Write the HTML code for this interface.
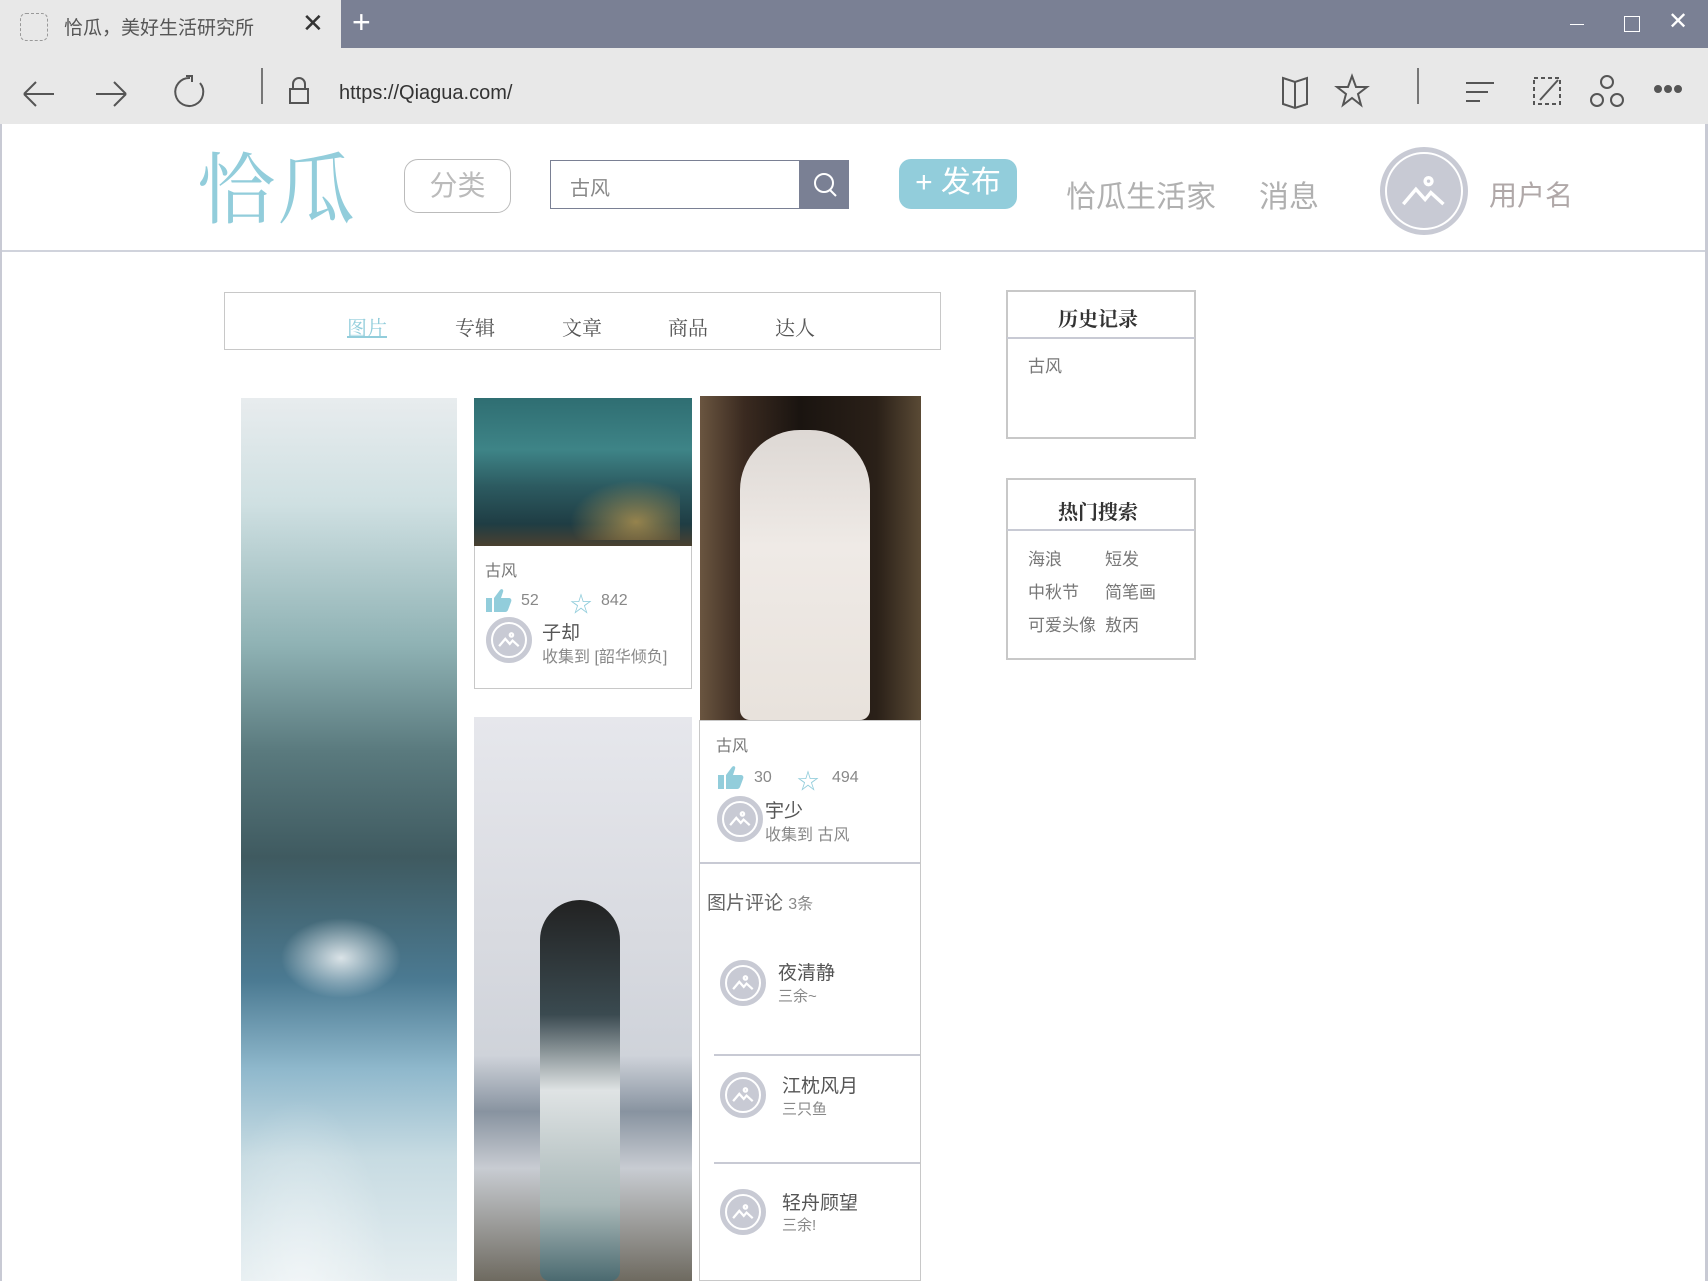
<!DOCTYPE html>
<html><head><meta charset="utf-8">
<style>
*{margin:0;padding:0;box-sizing:border-box}
body{width:1708px;height:1281px;overflow:hidden;background:#fff;position:relative;font-family:"Liberation Sans","Noto Sans CJK SC",sans-serif;color:#666}
.a{position:absolute;white-space:nowrap}
.serif{font-family:"Liberation Serif","Noto Serif CJK SC",serif}
.av{position:absolute;border-radius:50%;background:#c8cad4;border:3px solid #c8cad4;}
.av::before{content:"";position:absolute;inset:2px;border-radius:50%;border:2px solid #fff}
.av svg{position:absolute;left:22%;top:25%;width:56%;height:50%}
.box{position:absolute;border:2px solid #c8c8c8;background:#fff}
</style></head><body>
<div class="a" style="left:0;top:0;width:1708px;height:48px;background:#7a8094"></div>
<div class="a" style="left:0;top:0;width:341px;height:48px;background:#e8e8e8"></div>
<div class="a" style="left:20px;top:13px;width:28px;height:28px;border:1px dashed #999;border-radius:6px"></div>
<div class="a" style="left:64px;top:13px;font-size:19px;color:#555">恰瓜，美好生活研究所</div>
<div class="a" style="left:302px;top:8px;font-size:26px;color:#333">✕</div>
<div class="a" style="left:352px;top:4px;font-size:32px;color:#fff">+</div>
<div class="a" style="left:1570px;top:24px;width:14px;height:1px;background:#fff"></div>
<div class="a" style="left:1624px;top:16px;width:16px;height:16px;border:1.5px solid #fff"></div>
<div class="a" style="left:1668px;top:7px;font-size:24px;color:#fff">✕</div>
<div class="a" style="left:0;top:48px;width:1708px;height:76px;background:#e8e8e8"></div>
<svg class="a" style="left:0;top:48px" width="1708" height="76" fill="none" stroke="#555" stroke-width="2">
<path d="M24 46h30M24 46l12-12M24 46l12 12"/>
<path d="M96 46h30M126 46l-12-12M126 46l-12 12"/>
<path d="M190 30a14 14 0 1 0 10 5"/><path d="M186 28h6v6"/>
<path d="M262 20v36" stroke="#777"/>
<rect x="290" y="41" width="18" height="14"/><path d="M293 41v-5a6 6 0 0 1 12 0v5"/>
<path d="M1283 30l12 4l12-4v26l-12 4l-12-4z M1295 34v26"/>
<path d="M1352 28l4 11h11l-9 7l3 11l-9-7l-9 7l3-11l-9-7h11z"/>
<path d="M1418 20v36" stroke="#777"/>
<path d="M1466 35h28M1466 44h22M1466 53h14"/>
<rect x="1534" y="30" width="26" height="26" stroke-dasharray="4 3"/><path d="M1540 52l18-20"/>
<circle cx="1607" cy="34" r="6"/><circle cx="1597" cy="52" r="6"/><circle cx="1617" cy="52" r="6"/>
<circle cx="1658" cy="41" r="3" fill="#555"/><circle cx="1668" cy="41" r="3" fill="#555"/><circle cx="1678" cy="41" r="3" fill="#555"/>
</svg>
<div class="a" style="left:339px;top:82px;font-size:20px;color:#333">https://Qiagua.com/</div>
<div class="a" style="left:0;top:124px;width:2px;height:1157px;background:#c8cad4"></div>
<div class="a" style="left:1705px;top:124px;width:3px;height:1157px;background:#c8cad4"></div>
<div class="a serif" style="left:197px;top:128px;font-size:78px;color:#92cddb;letter-spacing:2px">恰瓜</div>
<div class="a" style="left:404px;top:159px;width:107px;height:54px;border:1px solid #bbb;border-radius:14px;text-align:center;line-height:52px;font-size:28px;color:#bbb">分类</div>
<div class="a" style="left:550px;top:160px;width:250px;height:49px;border:1.5px solid #7a8094"></div>
<div class="a" style="left:570px;top:172px;font-size:20px;color:#888">古风</div>
<div class="a" style="left:800px;top:160px;width:49px;height:49px;background:#7a8094"></div>
<svg class="a" style="left:800px;top:160px" width="49" height="49" fill="none" stroke="#fff" stroke-width="2"><circle cx="24" cy="23" r="9"/><path d="M30 30l6 6"/></svg>
<div class="a" style="left:899px;top:159px;width:118px;height:50px;background:#92cddb;border-radius:12px;color:#fff;font-size:30px;line-height:48px;text-align:center">+ 发布</div>
<div class="a" style="left:1066px;top:172px;font-size:30px;color:#b0b0b0">恰瓜生活家</div>
<div class="a" style="left:1259px;top:172px;font-size:30px;color:#b0b0b0">消息</div>
<div class="av" style="left:1380px;top:147px;width:88px;height:88px"><svg viewBox="0 0 40 30" fill="none" stroke="#fff" stroke-width="3"><path d="M2 26l11-13l8 9l5-6l11 10"/><circle cx="24" cy="6" r="3"/></svg></div>
<div class="a" style="left:1489px;top:174px;font-size:28px;color:#b0a8a8">用户名</div>
<div class="a" style="left:2px;top:250px;width:1703px;height:2px;background:#d0d3dc"></div>
<div class="box" style="left:224px;top:292px;width:717px;height:58px;border-width:1.5px"></div>
<div class="a serif" style="left:347px;top:312px;font-size:20px;color:#92cddb;text-decoration:underline">图片</div>
<div class="a serif" style="left:455px;top:312px;font-size:20px;color:#555">专辑</div>
<div class="a serif" style="left:562px;top:312px;font-size:20px;color:#555">文章</div>
<div class="a serif" style="left:668px;top:312px;font-size:20px;color:#555">商品</div>
<div class="a serif" style="left:775px;top:312px;font-size:20px;color:#555">达人</div>
<div class="box" style="left:1006px;top:290px;width:190px;height:149px"></div>
<div class="a" style="left:1007px;top:337px;width:188px;height:2px;background:#c8cad4"></div>
<div class="a serif" style="left:1058px;top:303px;font-size:20px;color:#333;font-weight:bold">历史记录</div>
<div class="a" style="left:1028px;top:352px;font-size:17px;color:#777">古风</div>
<div class="box" style="left:1006px;top:478px;width:190px;height:182px"></div>
<div class="a" style="left:1007px;top:529px;width:188px;height:2px;background:#c8cad4"></div>
<div class="a serif" style="left:1058px;top:496px;font-size:20px;color:#333;font-weight:bold">热门搜索</div>
<div class="a" style="left:1028px;top:543px;font-size:17px;color:#777;line-height:33px">海浪<br>中秋节<br>可爱头像</div>
<div class="a" style="left:1105px;top:543px;font-size:17px;color:#777;line-height:33px">短发<br>简笔画<br>敖丙</div>
<div class="a" style="left:241px;top:398px;width:216px;height:883px;background:linear-gradient(180deg,#e8ecee 0%,#cfe0e2 12%,#8fb2b4 28%,#5a7a7e 40%,#3f5a60 52%,#4b7a92 66%,#8fb8cc 76%,#c7dbe2 86%,#e4edf0 100%)"></div>
<div class="a" style="left:241px;top:398px;width:216px;height:883px;background:radial-gradient(ellipse 60px 40px at 100px 560px,rgba(255,255,255,.8),transparent),radial-gradient(ellipse 90px 200px at 60px 900px,rgba(255,255,255,.5),transparent)"></div>
<div class="box" style="left:474px;top:398px;width:218px;height:291px;border-width:1.5px"></div>
<div class="a" style="left:474px;top:398px;width:218px;height:148px;background:linear-gradient(180deg,#2f6e72 0%,#3e8487 35%,#2c5a60 60%,#1f3d44 85%,#4a4030 100%)"></div>
<div class="a" style="left:570px;top:480px;width:110px;height:60px;background:radial-gradient(ellipse at 60% 70%,rgba(200,160,80,.7),transparent 70%)"></div>
<div class="a" style="left:485px;top:557px;font-size:16px;color:#777">古风</div>
<svg class="a" style="left:486px;top:588px" width="26" height="24" viewBox="0 0 26 24" fill="#92cddb"><rect x="0" y="10" width="6" height="14"/><path d="M8 10l6-8c2-2 4 0 3 2l-2 6h8c2 0 3 2 2 4l-3 8c-1 2-2 2-4 2h-10z"/></svg>
<div class="a" style="left:521px;top:592px;font-size:16px;color:#888">52</div>
<div class="a" style="left:570px;top:587px;font-size:22px;color:#92cddb">☆</div>
<div class="a" style="left:601px;top:592px;font-size:16px;color:#888">842</div>
<div class="av" style="left:486px;top:617px;width:46px;height:46px"><svg viewBox="0 0 40 30" fill="none" stroke="#fff" stroke-width="4"><path d="M2 26l11-13l8 9l5-6l11 10"/><circle cx="24" cy="6" r="3"/></svg></div>
<div class="a" style="left:542px;top:618px;font-size:19px;color:#555">子却</div>
<div class="a" style="left:542px;top:643px;font-size:16px;color:#888">收集到 [韶华倾负]</div>
<div class="a" style="left:474px;top:717px;width:218px;height:564px;background:linear-gradient(180deg,#e6e7ec 0%,#d8dae0 40%,#cfd3da 60%,#8893a0 70%,#c8ccd2 80%,#6e6a60 100%)"></div>
<div class="a" style="left:540px;top:900px;width:80px;height:381px;background:linear-gradient(180deg,#222 0%,#3a4a50 30%,#dfe3e4 50%,#a9b8b8 80%,#4b6a70 100%);border-radius:40px 40px 10px 10px"></div>
<div class="a" style="left:700px;top:396px;width:221px;height:325px;background:linear-gradient(90deg,#6a5540 0%,#3a2a20 20%,#1a1410 45%,#2a2018 80%,#5a4a35 100%)"></div>
<div class="a" style="left:740px;top:430px;width:130px;height:290px;background:linear-gradient(180deg,#ddd8d4,#efeae6 40%,#e8e2dc);border-radius:60px 60px 10px 10px"></div>
<div class="box" style="left:699px;top:720px;width:222px;height:561px;border-width:1.5px"></div>
<div class="a" style="left:700px;top:862px;width:220px;height:2px;background:#c8cad4"></div>
<div class="a" style="left:716px;top:732px;font-size:16px;color:#777">古风</div>
<svg class="a" style="left:718px;top:765px" width="26" height="24" viewBox="0 0 26 24" fill="#92cddb"><rect x="0" y="10" width="6" height="14"/><path d="M8 10l6-8c2-2 4 0 3 2l-2 6h8c2 0 3 2 2 4l-3 8c-1 2-2 2-4 2h-10z"/></svg>
<div class="a" style="left:754px;top:769px;font-size:16px;color:#888">30</div>
<div class="a" style="left:797px;top:764px;font-size:22px;color:#92cddb">☆</div>
<div class="a" style="left:832px;top:769px;font-size:16px;color:#888">494</div>
<div class="av" style="left:717px;top:796px;width:46px;height:46px"><svg viewBox="0 0 40 30" fill="none" stroke="#fff" stroke-width="4"><path d="M2 26l11-13l8 9l5-6l11 10"/><circle cx="24" cy="6" r="3"/></svg></div>
<div class="a" style="left:765px;top:796px;font-size:19px;color:#555">宇少</div>
<div class="a" style="left:765px;top:821px;font-size:16px;color:#888">收集到 古风</div>
<div class="a" style="left:707px;top:888px;font-size:19px;color:#666">图片评论 <span style="font-size:16px;color:#888">3条</span></div>
<div class="a" style="left:714px;top:1054px;width:206px;height:2px;background:#c8cad4"></div>
<div class="a" style="left:714px;top:1162px;width:206px;height:2px;background:#c8cad4"></div>
<div class="av" style="left:720px;top:960px;width:46px;height:46px"><svg viewBox="0 0 40 30" fill="none" stroke="#fff" stroke-width="4"><path d="M2 26l11-13l8 9l5-6l11 10"/><circle cx="24" cy="6" r="3"/></svg></div>
<div class="a" style="left:778px;top:958px;font-size:19px;color:#555">夜清静</div>
<div class="a" style="left:778px;top:985px;font-size:15px;color:#888">三余~</div>
<div class="av" style="left:720px;top:1072px;width:46px;height:46px"><svg viewBox="0 0 40 30" fill="none" stroke="#fff" stroke-width="4"><path d="M2 26l11-13l8 9l5-6l11 10"/><circle cx="24" cy="6" r="3"/></svg></div>
<div class="a" style="left:782px;top:1071px;font-size:19px;color:#555">江枕风月</div>
<div class="a" style="left:782px;top:1098px;font-size:15px;color:#888">三只鱼</div>
<div class="av" style="left:720px;top:1189px;width:46px;height:46px"><svg viewBox="0 0 40 30" fill="none" stroke="#fff" stroke-width="4"><path d="M2 26l11-13l8 9l5-6l11 10"/><circle cx="24" cy="6" r="3"/></svg></div>
<div class="a" style="left:782px;top:1188px;font-size:19px;color:#555">轻舟顾望</div>
<div class="a" style="left:782px;top:1214px;font-size:15px;color:#888">三余!</div>
</body></html>
